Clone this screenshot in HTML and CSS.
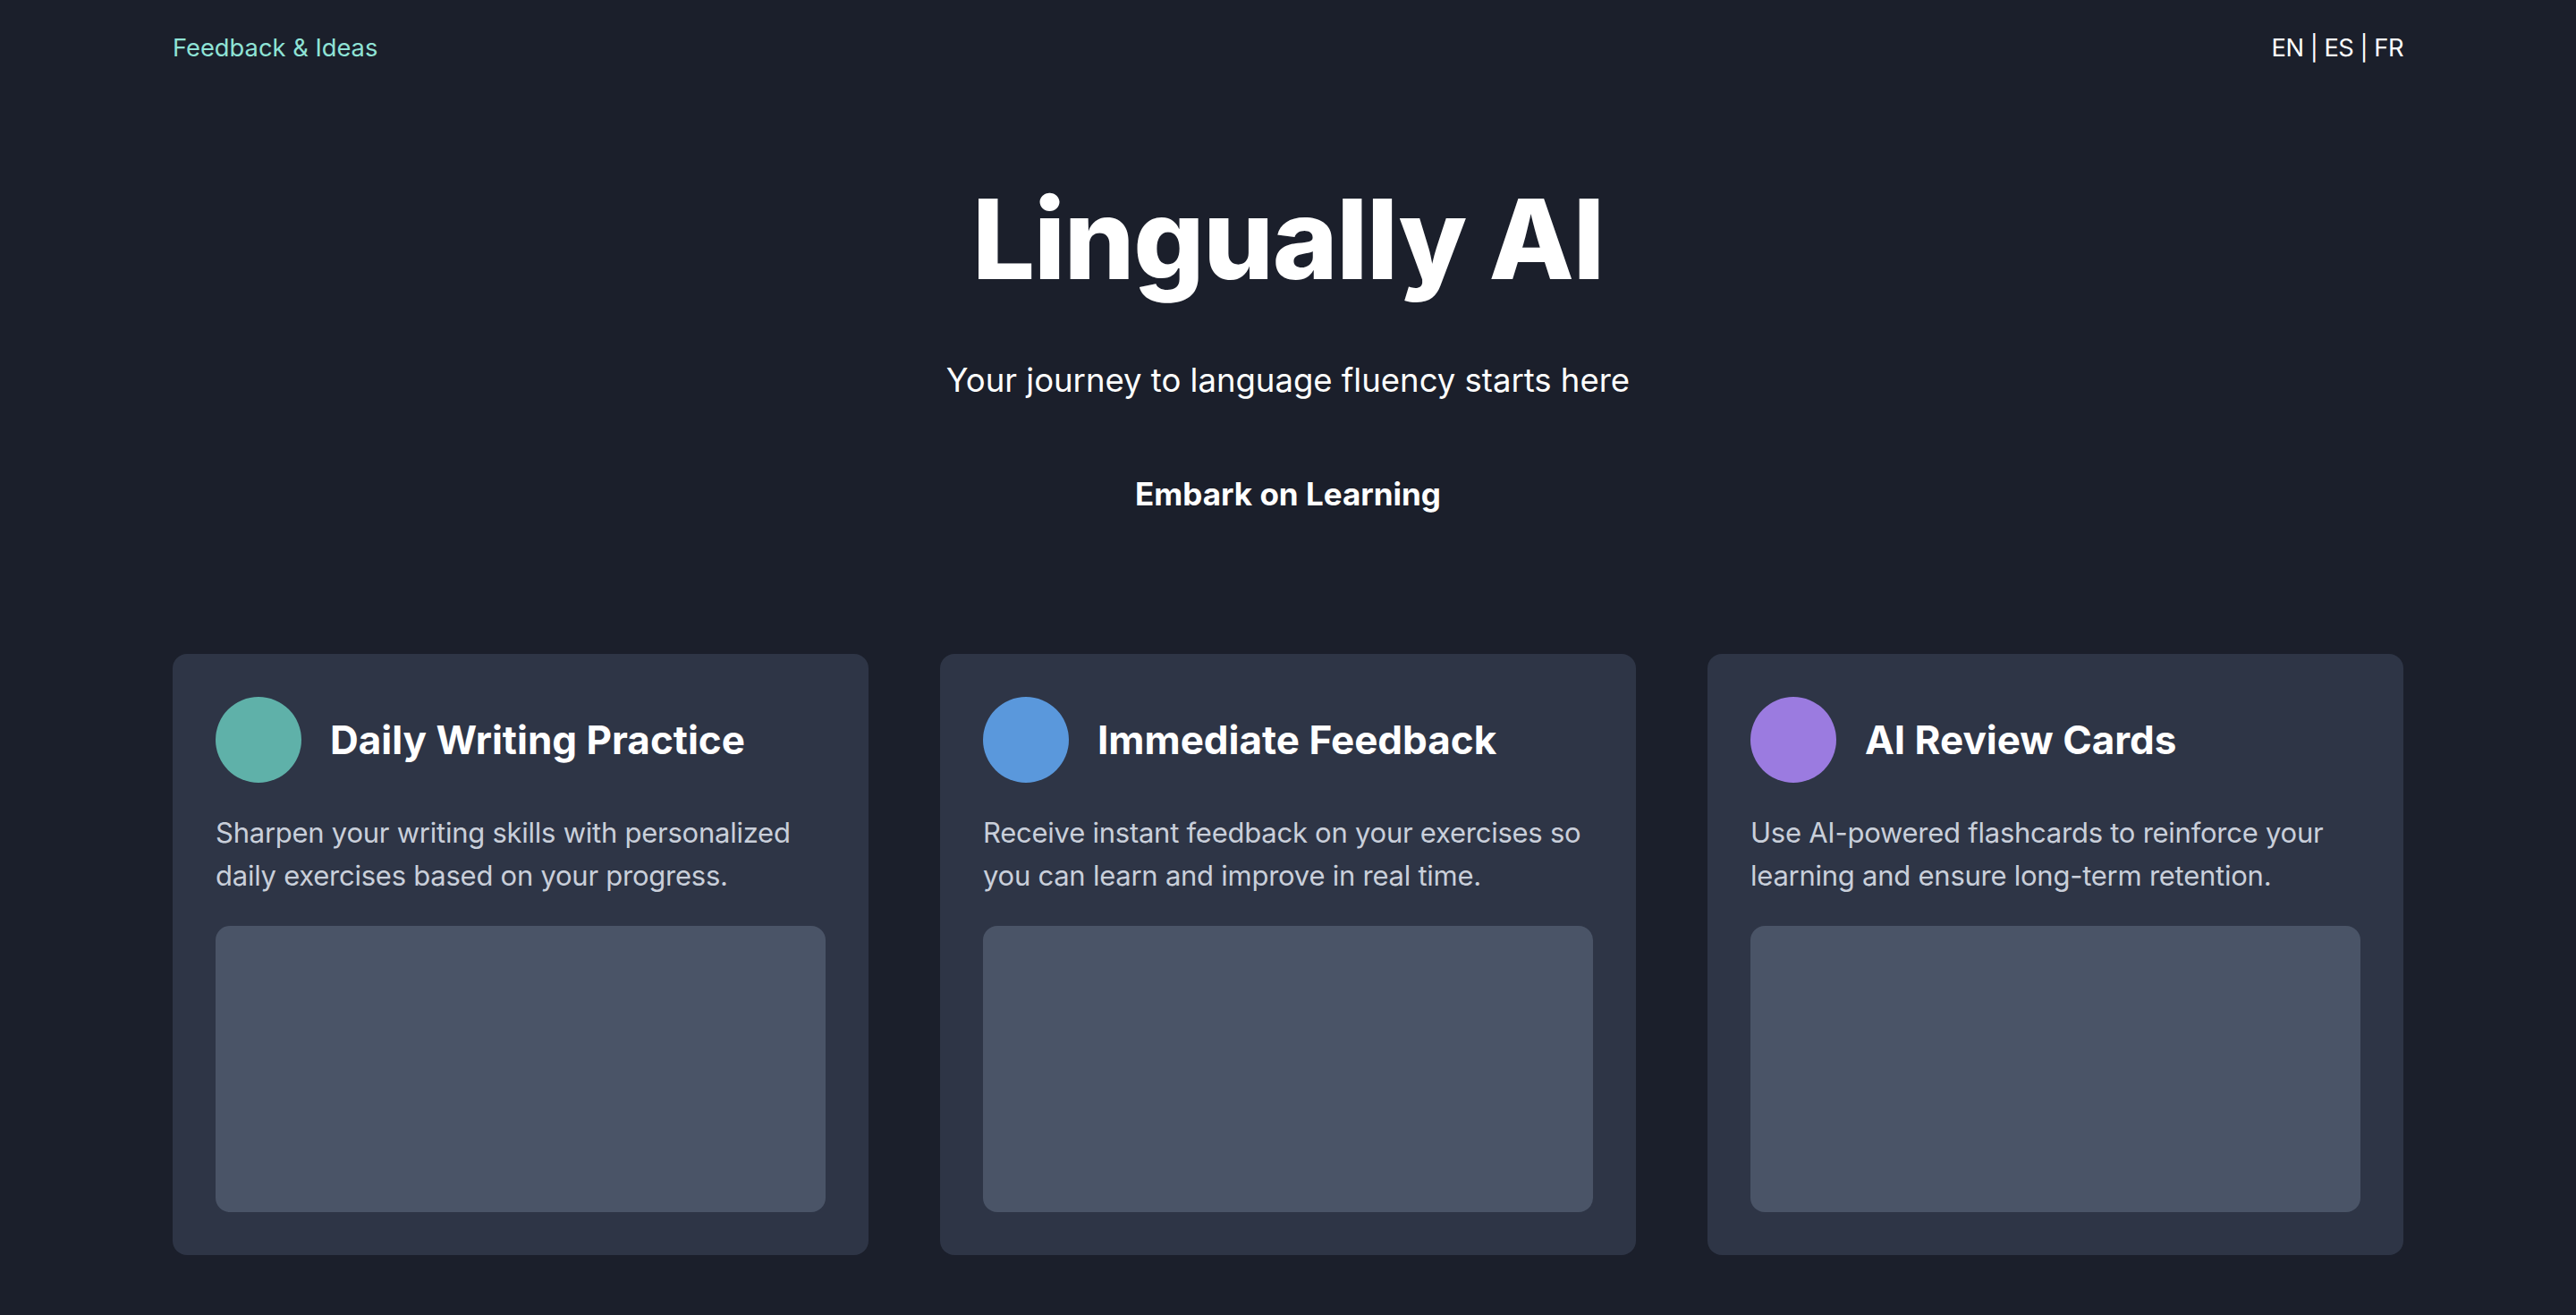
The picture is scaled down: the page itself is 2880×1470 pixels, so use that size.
FILE: index.html
```html
<!DOCTYPE html>
<html lang="en">
<head>
  <meta charset="UTF-8">
  <meta name="viewport" content="width=device-width, initial-scale=1.0">
  <title>Lingually AI</title>
  <link rel="stylesheet" href="styles.css">
</head>
<body>

  <div class="container">
    <nav class="topbar">
      <a href="#" class="feedback-link">Feedback &amp; Ideas</a>
      <div class="lang-switch">EN | ES | FR</div>
    </nav>

    <header class="hero">
      <h1>Lingually AI</h1>
      <p class="tagline">Your journey to language fluency starts here</p>
      <a href="#" class="cta">Embark on Learning</a>
    </header>

    <section class="features">
      <div class="card">
        <div class="card-head">
          <span class="dot dot-teal"></span>
          <h2>Daily Writing Practice</h2>
        </div>
        <p>Sharpen your writing skills with personalized daily exercises based on your progress.</p>
        <div class="preview"></div>
      </div>

      <div class="card">
        <div class="card-head">
          <span class="dot dot-blue"></span>
          <h2>Immediate Feedback</h2>
        </div>
        <p>Receive instant feedback on your exercises so you can learn and improve in real time.</p>
        <div class="preview"></div>
      </div>

      <div class="card">
        <div class="card-head">
          <span class="dot dot-purple"></span>
          <h2>AI Review Cards</h2>
        </div>
        <p>Use AI-powered flashcards to reinforce your learning and ensure long-term retention.</p>
        <div class="preview"></div>
      </div>
    </section>
  </div>

</body>
</html>
```

FILE: styles.css
```css
* {
  margin: 0;
  padding: 0;
  box-sizing: border-box;
}

body {
  font-family: Inter, "Noto Sans", Arial, sans-serif;
  background-color: #1b1f2b;
  color: #ffffff;
  min-height: 100vh;
}

a {
  text-decoration: none;
}

.container {
  max-width: 2494px;
  margin: 0 auto;
}

.topbar {
  display: flex;
  justify-content: space-between;
  align-items: center;
  padding-top: 34px;
  font-size: 27.3px;
  line-height: 40px;
}

.feedback-link {
  color: #8fe3d6;
}

.lang-switch {
  color: #ffffff;
  letter-spacing: -0.5px;
}

.hero {
  display: flex;
  flex-direction: column;
  align-items: center;
  text-align: center;
  padding-top: 130px;
}

h1 {
  font-size: 124px;
  font-weight: 800;
  line-height: 126px;
  letter-spacing: -1.3px;
}

.tagline {
  margin-top: 71px;
  font-size: 36.5px;
  line-height: 48px;
}

.cta {
  margin-top: 67px;
  padding: 16px 32px;
  font-size: 35px;
  line-height: 40px;
  font-weight: 700;
  color: #ffffff;
}

.features {
  display: grid;
  grid-template-columns: repeat(3, 1fr);
  gap: 80px;
  margin-top: 143px;
}

.card {
  background-color: #2e3546;
  border-radius: 16px;
  padding: 48px;
}

.card-head {
  display: flex;
  align-items: center;
  gap: 32px;
  margin-bottom: 32px;
}

.dot {
  width: 96px;
  height: 96px;
  border-radius: 50%;
  flex-shrink: 0;
}

.dot-teal {
  background-color: #5fb1a9;
}

.dot-blue {
  background-color: #5a98dc;
}

.dot-purple {
  background-color: #9b7be0;
}

.card h2 {
  font-size: 44px;
  font-weight: 700;
  line-height: 56px;
}

.card p {
  font-size: 31px;
  line-height: 48px;
  letter-spacing: -0.25px;
  color: #c9cfda;
  margin-bottom: 32px;
}

.preview {
  height: 320px;
  background-color: #4a5467;
  border-radius: 16px;
}
```
